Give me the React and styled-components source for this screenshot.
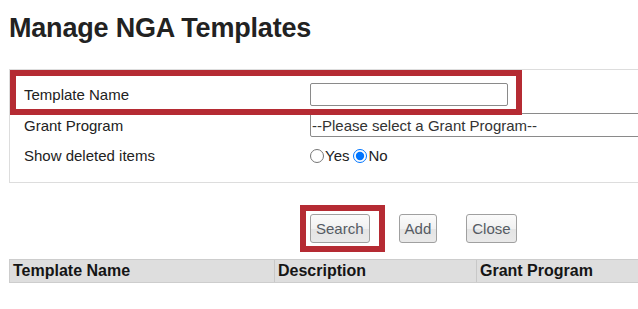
import React from 'react'
import styled, { createGlobalStyle } from 'styled-components';

const GlobalStyle = createGlobalStyle`
  html, body {
    margin: 0;
    padding: 0;
    background: #fff;
    overflow: hidden;
  }
  body {
    font-family: "Liberation Sans", Arial, sans-serif;
    color: #222;
  }
`;

const Page = styled.div`
  position: relative;
  width: 638px;
  height: 309px;
  padding: 11px 0 0 9px;
  box-sizing: border-box;
  overflow: hidden;
`;

const Title = styled.h1`
  margin: 0;
  font-size: 27px;
  line-height: 34px;
  font-weight: bold;
  letter-spacing: -0.2px;
  color: #222;
`;

const FilterPanel = styled.div`
  margin-top: 24px;
  width: 720px;
  border: 1px solid #ddd;
  padding: 9px 0 11px 14px;
  display: grid;
  grid-template-columns: 286px 1fr;
  grid-template-rows: 31px 30px 31px;
  align-items: center;
`;

const Label = styled.div`
  font-size: 15px;
  color: #222;
`;

const TextBox = styled.input`
  box-sizing: border-box;
  width: 198px;
  height: 23px;
  border: 1px solid #8a8a8a;
  border-radius: 2px;
  padding: 0 3px;
  font: 15px "Liberation Sans", Arial, sans-serif;
  outline: none;
`;

const Select = styled.select`
  box-sizing: border-box;
  width: 420px;
  height: 24px;
  border: 1px solid #8a8a8a;
  border-radius: 2px;
  padding: 0 1px;
  background: #fff;
  color: #333;
  font: 15px "Liberation Sans", Arial, sans-serif;
  appearance: none;
`;

const RadioGroup = styled.div`
  display: flex;
  align-items: center;
  font-size: 15px;
  color: #222;
`;

const Radio = styled.input`
  width: 14px;
  height: 14px;
  margin: 0 1px 0 ${p => (p.$first ? '0' : '4px')};
  accent-color: #0075ff;
`;

const ButtonRow = styled.div`
  display: flex;
  gap: 29px;
  margin-top: 31px;
  padding-left: 301px;
`;

const Button = styled.button`
  height: 29px;
  padding: 0 5px;
  border: 1px solid #a0a0a0;
  border-radius: 3px;
  background: linear-gradient(#fbfbfb 0%, #f1f1f1 50%, #e4e4e4 51%, #e9e9e9 100%);
  color: #555b63;
  font: 15px "Liberation Sans", Arial, sans-serif;
  cursor: pointer;
`;

const HeaderRow = styled.div`
  margin-top: 16px;
  width: 720px;
  height: 24px;
  box-sizing: border-box;
  display: grid;
  grid-template-columns: 264px 202px 1fr;
  background: #dedede;
  border: 1px solid #cdcdcd;
`;

const HeaderCell = styled.div`
  display: flex;
  align-items: center;
  padding-left: 3px;
  font-size: 16px;
  font-weight: bold;
  color: #151515;
  border-left: ${p => (p.$first ? 'none' : '1px solid #c8c8c8')};
`;

const Highlight = styled.div`
  position: absolute;
  box-sizing: border-box;
  border: 6px solid #b52b33;
  pointer-events: none;
  left: ${p => p.$x}px;
  top: ${p => p.$y}px;
  width: ${p => p.$w}px;
  height: ${p => p.$h}px;
`;

export default function App() {
  return (
    <>
      <GlobalStyle />
      <Page>
        <Title>Manage NGA Templates</Title>

        <FilterPanel>
          <Label>Template Name</Label>
          <div><TextBox type="text" /></div>

          <Label>Grant Program</Label>
          <div>
            <Select defaultValue="">
              <option value="">--Please select a Grant Program--</option>
            </Select>
          </div>

          <Label>Show deleted items</Label>
          <RadioGroup>
            <Radio type="radio" name="deleted" $first />Yes
            <Radio type="radio" name="deleted" defaultChecked />No
          </RadioGroup>
        </FilterPanel>

        <ButtonRow>
          <Button>Search</Button>
          <Button>Add</Button>
          <Button>Close</Button>
        </ButtonRow>

        <HeaderRow>
          <HeaderCell $first>Template Name</HeaderCell>
          <HeaderCell>Description</HeaderCell>
          <HeaderCell>Grant Program</HeaderCell>
        </HeaderRow>

        <Highlight $x={10} $y={70} $w={512} $h={45} />
        <Highlight $x={300} $y={205} $w={85} $h={47} />
      </Page>
    </>
  )
}
